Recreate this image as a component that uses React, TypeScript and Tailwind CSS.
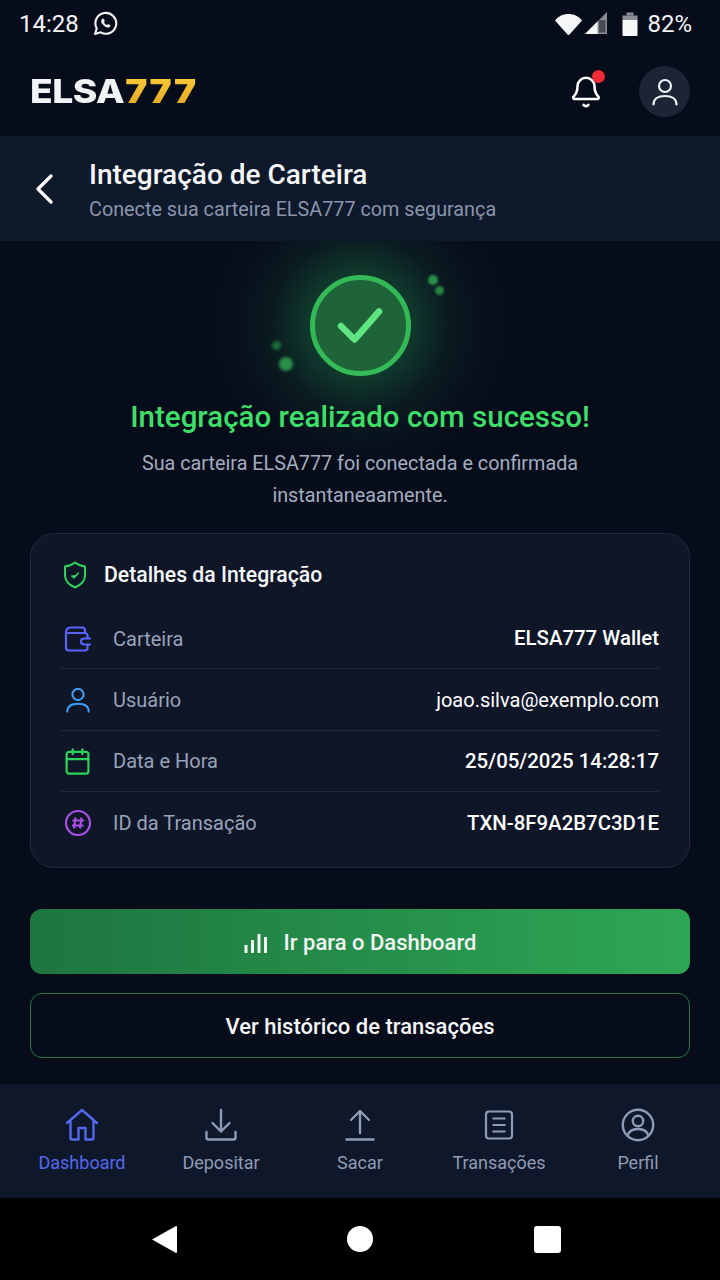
import React from "react";
import { Bell, Calendar } from "lucide-react";

const Person = ({ size, color, stroke }: { size: number; color: string; stroke: number }) => (
  <svg width={size} height={size} viewBox="0 0 28 28" fill="none" stroke={color} strokeWidth={stroke} strokeLinecap="round">
    <circle cx="14" cy="8" r="6" />
    <path d="M2.500 26.500c0-5.500 4.500-8.500 11.500-8.500s11.500 3 11.500 8.500" />
  </svg>
);

const Row = ({ icon, label, value, bold, last }: { icon: React.ReactNode; label: string; value: string; bold?: boolean; last?: boolean }) => (
  <div className={`flex h-[61.3px] items-center pt-[1px] ${last ? "" : "border-b border-[#1f2a3f]"}`}>
    <div className="flex w-[33px] justify-center">{icon}</div>
    <span className="ml-[19px] text-[20px] text-[#99a3b8]">{label}</span>
    <span className={`ml-auto text-white ${bold ? "text-[20.400px] font-medium" : "text-[20px]"}`}>{value}</span>
  </div>
);

const NavItem = ({ icon, label, active }: { icon: React.ReactNode; label: string; active?: boolean }) => (
  <div className={`flex w-[139px] flex-col items-center ${active ? "text-[#5468ee]" : "text-[#8f9bb5]"}`}>
    <div className="flex h-[34px] items-center justify-center">{icon}</div>
    <span className="mt-[9px] text-[18px] leading-[24px]">{label}</span>
  </div>
);

export default function App() {
  return (
    <div className="flex h-[1280px] w-[720px] flex-col overflow-hidden bg-[#070c1b] font-['Roboto',sans-serif] text-white">
      <div className="flex h-[47px] items-center px-[19px]">
        <span className="text-[24px] text-[#f4f5f7]">14:28</span>
        <svg className="ml-[14px]" width="25" height="25" viewBox="0 0 24 24" fill="none" stroke="#f4f5f7" strokeWidth="2" strokeLinejoin="round" strokeLinecap="round">
          <path d="M2 22l1.600-5.300A10 10 0 1 1 7.400 20.500z" />
          <path d="M8.700 8.200c.3-.6 1.200-.9 1.500-.4l.8 1.600c.1.3-.4.9-.7 1.300.5 1.200 1.700 2.400 3 3 .4-.3 1-.9 1.300-.8l1.600.8c.5.3.2 1.200-.4 1.600-1 .7-2.600.4-4.600-1s-3.100-3-3.100-4.200c0-.7.3-1.400.6-1.900z" fill="#f4f5f7" strokeWidth="0.500" />
        </svg>
        <div className="ml-auto flex items-center">
          <svg width="27" height="22" viewBox="0 0 27 22" fill="#f6f7f8"><path d="M0 7.500C3.500 3 8.500 1 13.500 1S23.500 3 27 7.500L14.500 21.500a1.400 1.400 0 0 1-2 0z" /></svg>
          <svg className="ml-[3px]" width="23" height="23" viewBox="0 0 23 23"><path d="M0 22L22 0v22z" fill="#8a8d94" /><path d="M0 22L12.500 9.500V22z" fill="#f6f7f8" /><path d="M14 8h6.500v12.500H14z" fill="#474b55" /></svg>
          <svg className="ml-[14px]" width="16" height="24" viewBox="0 0 16 24"><path d="M0.500 3.500h15V8H0.500z" fill="#8a8d94" /><path d="M4.500 0.500h7v3h-7z" fill="#8a8d94" /><path d="M0.500 8h15v15a1 1 0 0 1-1 1H1.500a1 1 0 0 1-1-1z" fill="#f6f7f8" /></svg>
          <span className="ml-[9px] mr-[9px] text-[24px] text-[#f4f5f7]">82%</span>
        </div>
      </div>

      <div className="flex h-[89px] items-center px-[30px]">
        <div className="flex origin-left scale-x-[1.13] font-['Inter',sans-serif] text-[33px] leading-none font-extrabold tracking-[-0.5px]">
          <span className="text-[#f2f3f5]">ELSA</span>
          <span className="ml-[1px] bg-gradient-to-b from-[#f8cb3a] to-[#e6a622] bg-clip-text pr-[3px] font-black tracking-[1.300px] text-transparent">777</span>
        </div>
        <div className="relative ml-auto mr-[36px]">
          <Bell size={34} strokeWidth={1.8} className="text-white" />
          <span className="absolute right-[-2px] top-[-5px] h-[13px] w-[13px] rounded-full bg-[#ef2b36]" />
        </div>
        <div className="flex h-[51px] w-[51px] items-center justify-center rounded-full bg-[#1c2536]">
          <Person size={28} color="#eef0f4" stroke={2.200} />
        </div>
      </div>

      <div className="flex h-[105px] items-center bg-[#0f192c] pl-[36px]">
        <svg width="18" height="30" viewBox="0 0 18 30" fill="none" stroke="#fff" strokeWidth="3.200" strokeLinecap="round" strokeLinejoin="round"><path d="M15 2L2 15l13 13" /></svg>
        <div className="ml-[35px] mt-[4px]">
          <div className="text-[28px] leading-[35px] font-medium text-[#f6f7f9]">Integração de Carteira</div>
          <div className="mt-[4px] text-[19.800px] leading-[28px] text-[#8b95ab]">Conecte sua carteira ELSA777 com segurança</div>
        </div>
      </div>

      <div className="relative flex flex-1 flex-col items-center overflow-hidden">
        <div className="absolute left-[200px] top-[-76px] h-[320px] w-[320px] rounded-full bg-[radial-gradient(circle_closest-side,rgba(38,170,85,0.42)_0%,rgba(34,150,78,0.3)_35%,rgba(30,130,70,0.13)_55%,rgba(30,130,70,0.03)_78%,rgba(30,130,70,0)_95%)]" />
        <div className="relative mt-[34px] flex h-[101px] w-[101px] items-center justify-center rounded-full border-[5px] border-[#33b955] bg-[#1e6438]">
          <svg width="56" height="56" viewBox="0 0 56 56" fill="none" stroke="#5fe581" strokeWidth="6.500" strokeLinecap="round" strokeLinejoin="round"><path d="M7 28l13.500 13.500L45 13.500" transform="translate(2 0)" /></svg>
          <span className="absolute left-[113px] top-[-5px] h-[10px] w-[10px] rounded-full bg-[#2b8f49] blur-[1px]" />
          <span className="absolute left-[120px] top-[6px] h-[9px] w-[9px] rounded-full bg-[#28833f] blur-[1px]" />
          <span className="absolute left-[-43px] top-[61px] h-[9px] w-[9px] rounded-full bg-[#1b6d36] blur-[1.500px]" />
          <span className="absolute left-[-36px] top-[77px] h-[14px] w-[14px] rounded-full bg-[#2b8f49] blur-[1.500px]" />
        </div>
        <h1 className="relative mt-[22px] text-[29.500px] leading-[38px] font-medium text-[#3fde68]">Integração realizado com sucesso!</h1>
        <p className="relative mt-[12px] w-[480px] text-center text-[19.800px] leading-[32px] text-[#a3acbf]">Sua carteira ELSA777 foi conectada e confirmada instantaneaamente.</p>

        <div className="relative mt-[21px] w-[660px] rounded-[24px] border border-[#1f2a3f] bg-[#0e1628] px-[30px] pt-[9px] pb-[14px]">
          <div className="mb-[2px] flex h-[63px] items-center">
            <svg className="ml-[2px]" width="24" height="28" viewBox="0 0 24 28" fill="none" stroke="#2fd35a" strokeWidth="2" strokeLinejoin="round">
              <path d="M12 1.500c3 2.500 6 3.500 10 4v9c0 6-4.500 9.500-10 12-5.500-2.500-10-6-10-12v-9c4-.5 7-1.500 10-4z" />
              <path d="M8.500 15l2.500 2 4.500-5-3 2.500z" fill="#2fd35a" strokeWidth="1.200" />
            </svg>
            <span className="ml-[17px] text-[21.200px] font-medium text-[#f6f7f9]">Detalhes da Integração</span>
          </div>
          <Row icon={<svg width="28" height="26" viewBox="0 0 28 26" fill="none" stroke="#5b63ff" strokeWidth="2.200" strokeLinecap="round" strokeLinejoin="round"><path d="M2 6.500V21.500a3 3 0 0 0 3 3h16a2.500 2.500 0 0 0 2.500-2.500v-3" /><path d="M23.500 12.500V9.500a2.500 2.500 0 0 0-2.500-2.500H3.500" /><path d="M2 6.500a4.500 4.500 0 0 1 4.500-5H18a3 3 0 0 1 3 3v2" /><path d="M26 12.500h-6a3 3 0 0 0 0 6h6" /></svg>} label="Carteira" value="ELSA777 Wallet" bold />
          <Row icon={<Person size={26} color="#3f9cf5" stroke={2.200} />} label="Usuário" value="joao.silva@exemplo.com" />
          <Row icon={<Calendar size={29} strokeWidth={1.8} className="text-[#2fd35a]" />} label="Data e Hora" value="25/05/2025 14:28:17" bold />
          <Row icon={<svg width="28" height="28" viewBox="0 0 28 28" fill="none" stroke="#a94fe8" strokeWidth="2.200"><circle cx="14" cy="14" r="12" /><path d="M11.500 8.500L10 19.500M17.500 8.500L16 19.500M8.500 11.500h11.500M8 16.500h11.500" /></svg>} label="ID da Transação" value="TXN-8F9A2B7C3D1E" bold last />
        </div>

        <button className="relative mt-[41px] flex h-[65px] w-[660px] items-center justify-center rounded-[12px] bg-gradient-to-r from-[#1d7540] to-[#2ea754] pt-[2px]">
          <svg width="24" height="20" viewBox="0 0 24 20" fill="#f1f4f2"><path d="M0.500 12h3v8h-3zM7 7h3v13H7zM13.500 1h3v19h-3zM20 4h3v16h-3z" /></svg>
          <span className="ml-[16px] text-[22px] font-medium text-[#f3f5f4]">Ir para o Dashboard</span>
        </button>
        <button className="relative mt-[19px] flex h-[65px] w-[660px] items-center justify-center rounded-[12px] border border-[#1f7a42] bg-[#070c1b] pt-[2px]">
          <span className="text-[22px] font-medium text-[#f3f5f7]">Ver histórico de transações</span>
        </button>
      </div>

      <div className="flex h-[114px] items-start justify-center bg-[#0f182b] pt-[24px]">
        <NavItem active label="Dashboard" icon={
          <svg width="34" height="34" viewBox="0 0 34 34" fill="none" stroke="currentColor" strokeWidth="2.400" strokeLinejoin="round" strokeLinecap="round">
            <path d="M2 15L17 2l15 13M5.500 13v17a1.500 1.500 0 0 0 1.500 1.500h6.500V20h7v11.500H27a1.500 1.500 0 0 0 1.500-1.500V13" />
          </svg>} />
        <NavItem label="Depositar" icon={
          <svg width="34" height="34" viewBox="0 0 34 34" fill="none" stroke="currentColor" strokeWidth="2.400" strokeLinejoin="round" strokeLinecap="round">
            <path d="M17 2v21M8.500 15l8.500 8.500 8.500-8.500M2.500 24v5.500a2 2 0 0 0 2 2h25a2 2 0 0 0 2-2V24" />
          </svg>} />
        <NavItem label="Sacar" icon={
          <svg width="34" height="34" viewBox="0 0 34 34" fill="none" stroke="currentColor" strokeWidth="2.400" strokeLinejoin="round" strokeLinecap="round">
            <path d="M17 25V3M8 12l9-9 9 9M3.500 31.500h27" />
          </svg>} />
        <NavItem label="Transações" icon={<svg width="30" height="32" viewBox="0 0 30 32" fill="none" stroke="currentColor" strokeWidth="2.200"><rect x="2" y="2.500" width="26" height="27" rx="3" /><path d="M8.500 9.500h13M8.500 16h13M8.500 22.500h13" /></svg>} />
        <NavItem label="Perfil" icon={
          <svg width="34" height="34" viewBox="0 0 34 34" fill="none" stroke="currentColor" strokeWidth="2.400">
            <circle cx="17" cy="17" r="15.200" />
            <circle cx="17" cy="13" r="5.200" />
            <path d="M6.500 28c1-4.500 5-7 10.500-7s9.500 2.500 10.500 7" />
          </svg>} />
      </div>
      <div className="flex h-[82px] items-center bg-black">
        <div className="flex w-full items-center pl-[151px]">
          <svg width="27" height="29" viewBox="0 0 27 29" fill="#fff"><path d="M1 14.500L25 1a1 1 0 0 1 1 1v25a1 1 0 0 1-1 1z" /></svg>
          <div className="ml-[169px] h-[26px] w-[26px] rounded-full bg-white" />
          <div className="ml-[161px] h-[27px] w-[27px] rounded-[3px] bg-white" />
        </div>
      </div>
    </div>
  );
}
